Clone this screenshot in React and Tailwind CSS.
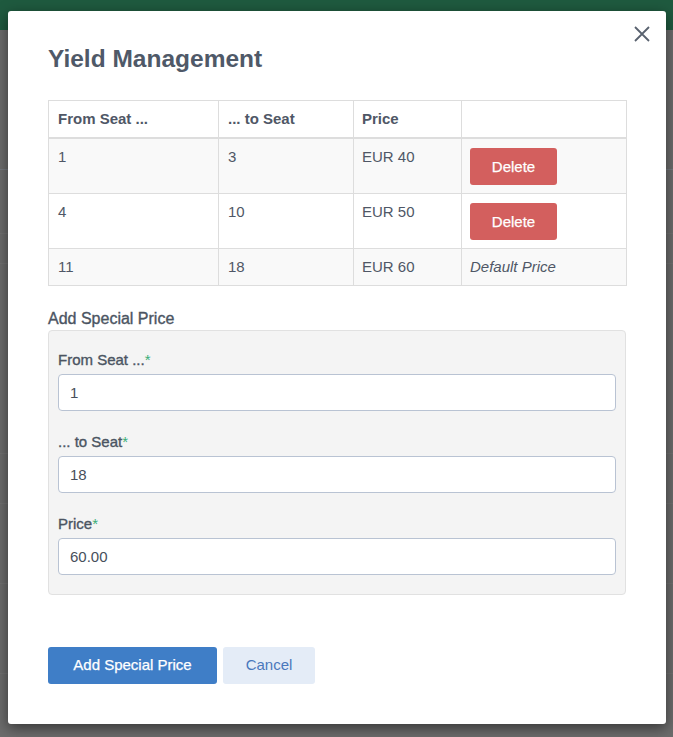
import React from "react";

const font = { fontFamily: '"Liberation Sans", Arial, Helvetica, sans-serif' };

function Star() {
  return <span className="text-[#3aae78] [-webkit-text-stroke:0px_transparent]">*</span>;
}

function Field({ label, value }) {
  return (
    <div className="flex flex-col">
      <label className="text-[15px] leading-[20px] text-[#4b5462]">
        <span className="[-webkit-text-stroke:0.35px_#4b5462]">{label}</span>
        <Star />
      </label>
      <input
        readOnly
        value={value}
        className="mt-[4px] h-[37px] w-full rounded-[4px] border border-[#b9c3d3] bg-white px-[11px] text-[15px] text-[#474f5b] outline-none"
        style={font}
      />
    </div>
  );
}

function DeleteBtn() {
  return (
    <button className="h-[37px] w-[87px] rounded-[3px] bg-[#d35f5e] text-[15px] text-white [-webkit-text-stroke:0.25px_white]">
      Delete
    </button>
  );
}

export default function App() {
  const rows = [
    { a: "1", b: "3", p: "EUR 40", del: true, bg: "bg-[#f9f9f9]" },
    { a: "4", b: "10", p: "EUR 50", del: true, bg: "bg-white" },
    { a: "11", b: "18", p: "EUR 60", del: false, bg: "bg-[#f9f9f9]" },
  ];
  return (
    <div className="relative h-[737px] w-full overflow-hidden bg-[#6c6c6c]" style={font}>
      {/* dimmed page behind */}
      <div className="h-[30px] bg-[#1f5a3f]" />
      <div className="flex flex-col">
        <div className="h-[140px] border-b border-[#767a80]" />
        <div className="h-[64px] border-b border-[#727272]" />
        <div className="h-[30px] border-b border-[#727272]" />
        <div className="h-[190px] border-b border-[#727272]" />
        <div className="h-[50px] border-b border-[#727272]" />
        <div className="h-[80px] border-b border-[#727272]" />
        <div className="h-[90px] border-b border-[#727272]" />
      </div>

      {/* modal */}
      <div className="absolute left-[8px] top-[11px] h-[713px] w-[658px] rounded-[3px] bg-white px-[40px] pt-[33px] shadow-[0_4px_14px_rgba(0,0,0,0.5)]">
        <button className="absolute right-[15px] top-[14px] flex h-[18px] w-[18px] items-center justify-center">
          <svg width="16" height="16" viewBox="0 0 16 16">
            <path d="M1 1 L15 15 M15 1 L1 15" stroke="#59626f" strokeWidth="1.8" fill="none" />
          </svg>
        </button>
        <h1 className="text-[24.5px] font-bold leading-[30px] text-[#4f5968]">
          Yield Management
        </h1>

        <table className="mt-[26px] w-[578px] table-fixed border-collapse text-[15px] text-[#4f5766]">
          <colgroup>
            <col className="w-[170px]" />
            <col className="w-[135px]" />
            <col className="w-[108px]" />
            <col className="w-[165px]" />
          </colgroup>
          <thead>
            <tr className="border-b-2 border-[#dddddd]">
              <th className="border border-[#dddddd] px-[9px] py-[8px] text-left font-bold leading-[20px]">From Seat ...</th>
              <th className="border border-[#dddddd] px-[9px] py-[8px] text-left font-bold leading-[20px]">... to Seat</th>
              <th className="border border-[#dddddd] px-[8px] py-[8px] text-left font-bold leading-[20px]">Price</th>
              <th className="border border-[#dddddd] px-[8px] py-[8px]" />
            </tr>
          </thead>
          <tbody>
            {rows.map((r, i) => (
              <tr key={i} className={r.bg}>
                <td className="border border-[#dddddd] px-[9px] py-[8px] align-top leading-[20px]">{r.a}</td>
                <td className="border border-[#dddddd] px-[9px] py-[8px] align-top leading-[20px]">{r.b}</td>
                <td className="border border-[#dddddd] px-[8px] py-[8px] align-top leading-[20px]">{r.p}</td>
                <td className="border border-[#dddddd] px-[8px] py-[8px] align-top leading-[20px]">
                  {r.del ? (
                    <div className="pt-[1px]">
                      <DeleteBtn />
                    </div>
                  ) : (
                    <span className="italic">Default Price</span>
                  )}
                </td>
              </tr>
            ))}
          </tbody>
        </table>

        <h2 className="mt-[22px] text-[16px] leading-[22px] text-[#4b5462] [-webkit-text-stroke:0.35px_#4b5462]">Add Special Price</h2>
        <div className="flex w-[578px] flex-col gap-[21px] rounded-[4px] border border-[#e1e1e1] bg-[#f4f4f4] px-[9px] pb-[19px] pt-[19px]">
          <Field label="From Seat ..." value="1" />
          <Field label="... to Seat" value="18" />
          <Field label="Price" value="60.00" />
        </div>

        <div className="mt-[52px] flex gap-[6px]">
          <button className="h-[37px] w-[169px] rounded-[3px] bg-[#3f7ec7] text-[15px] text-white [-webkit-text-stroke:0.25px_white]">
            Add Special Price
          </button>
          <button className="h-[37px] w-[92px] rounded-[3px] bg-[#e4ecf7] text-[15px] text-[#4a78bc]">
            Cancel
          </button>
        </div>
      </div>
    </div>
  );
}
